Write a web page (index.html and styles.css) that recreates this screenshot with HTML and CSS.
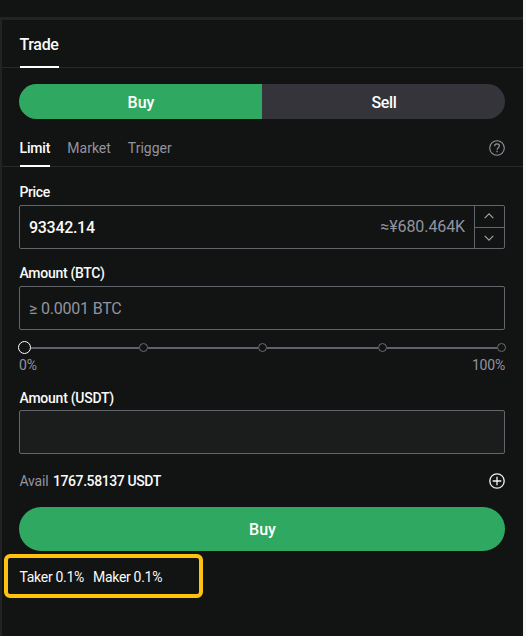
FILE: index.html
```html
<!DOCTYPE html>
<html lang="en">
<head>
  <meta charset="UTF-8" />
  <meta name="viewport" content="width=device-width, initial-scale=1.0"/>
  <title>Trade</title>
  <link rel="stylesheet" href="styles.css">
</head>
<body>
  <div class="page">
    <div class="panel">
      <div class="panel-header">
        <div class="panel-title">Trade</div>
      </div>

      <div class="side-toggle">
        <button class="side buy">Buy</button>
        <button class="side sell">Sell</button>
      </div>

      <div class="order-tabs">
        <div class="tab active">Limit</div>
        <div class="tab">Market</div>
        <div class="tab">Trigger</div>
        <svg class="help" width="16" height="16" viewBox="0 0 16 16" fill="none" stroke="#92939c">
          <circle cx="8" cy="8" r="7.3" stroke-width="1.1"/>
          <path d="M5.6 6.2c0-1.5 1-2.4 2.4-2.4s2.4.9 2.4 2.2c0 1.7-2.3 1.8-2.3 3.7" stroke-width="1.2"/>
          <path d="M8.1 10.8v1.4" stroke-width="1.3"/>
        </svg>
      </div>

      <div class="form">
        <div class="label price-label">Price</div>
        <div class="field">
          <span class="value">93342.14</span>
          <span class="approx">≈¥680.464K</span>
          <div class="stepper">
            <div class="step">
              <svg width="10" height="6" viewBox="0 0 10 6" fill="none" stroke="#a0a1aa" stroke-width="1.2"><path d="M.7 5.2 5 .9l4.3 4.3"/></svg>
            </div>
            <div class="step">
              <svg width="10" height="6" viewBox="0 0 10 6" fill="none" stroke="#a0a1aa" stroke-width="1.2"><path d="M.7.8 5 5.1 9.3.8"/></svg>
            </div>
          </div>
        </div>

        <div class="label btc-label">Amount (BTC)</div>
        <div class="field">
          <span class="placeholder">≥ 0.0001 BTC</span>
        </div>

        <div class="slider">
          <span class="knob"></span>
          <span class="rail"></span>
          <span class="dot"></span>
          <span class="rail"></span>
          <span class="dot"></span>
          <span class="rail"></span>
          <span class="dot"></span>
          <span class="rail"></span>
          <span class="dot"></span>
        </div>
        <div class="slider-labels">
          <span>0%</span>
          <span>100%</span>
        </div>

        <div class="label usdt-label">Amount (USDT)</div>
        <div class="field total"></div>

        <div class="avail">
          <span class="avail-name">Avail</span>
          <span class="avail-value">1767.58137 USDT</span>
          <svg class="plus" width="16" height="16" viewBox="0 0 16 16" fill="none" stroke="#f2f2f2" stroke-width="1.3">
            <circle cx="8" cy="8" r="7.2"/>
            <path d="M8 3.7v8.6M3.7 8h8.6"/>
          </svg>
        </div>

        <button class="submit">Buy</button>

        <div class="fees">
          <span>Taker 0.1%</span>
          <span>Maker 0.1%</span>
        </div>
      </div>
    </div>
  </div>
</body>
</html>
```

FILE: styles.css
```css
:root {
  --bg: #121413;
  --line: #222323;
  --border: #63646c;
  --muted: #92939f;
  --text: #fafafa;
  --green: #2fa861;
}

* {
  box-sizing: border-box;
}

body {
  margin: 0;
  background-color: #f7f7f7;
  font-family: Roboto, 'Noto Sans', sans-serif;
  font-size: 14px;
  color: var(--text);
}

.page {
  width: 523px;
  height: 636px;
  padding-top: 17px;
  background-color: var(--bg);
  overflow: hidden;
}

.panel {
  height: 619px;
  border-top: 3px solid var(--line);
  border-left: 2px solid var(--line);
}

.panel-header {
  display: flex;
  height: 48px;
  padding-left: 17.5px;
  border-bottom: 1px solid #272828;
}

.panel-title {
  height: 48px;
  line-height: 50px;
  font-size: 16px;
  font-weight: 500;
  letter-spacing: -0.35px;
  border-bottom: 2px solid #fff;
}

.side-toggle {
  display: flex;
  height: 35px;
  margin: 16px 18px 0 17px;
  border-radius: 18px;
  overflow: hidden;
}

.side {
  flex: 1;
  padding: 1px 0 0 1px;
  border: none;
  color: #fff;
  font-family: inherit;
  font-size: 16px;
  font-weight: 500;
}

.buy {
  background-color: var(--green);
}

.sell {
  background-color: #34343a;
  letter-spacing: -0.3px;
}

.order-tabs {
  display: flex;
  gap: 17px;
  height: 48px;
  padding: 0 18px 0 17.5px;
  border-bottom: 1px solid #272828;
}

.tab {
  height: 48px;
  line-height: 58px;
  color: var(--muted);
}

.tab.active {
  color: #fff;
  font-weight: 500;
  letter-spacing: -0.15px;
  border-bottom: 2px solid #fff;
}

.help {
  margin: 20.5px 0 0 auto;
}

.form {
  padding: 0 18px 0 17px;
}

.label {
  height: 20px;
  padding-left: 0.5px;
  line-height: 20px;
  font-weight: 500;
  letter-spacing: -0.3px;
}

.price-label {
  margin: 15px 0 3px;
  letter-spacing: -0.4px;
}

.btc-label {
  margin: 14px 0 3px;
}

.usdt-label {
  margin: 13px 0 2px;
  letter-spacing: -0.25px;
}

.field {
  display: flex;
  align-items: center;
  height: 44px;
  padding-left: 9px;
  border: 1px solid var(--border);
  border-radius: 2px;
  font-size: 16px;
}

.field.total {
  background-color: #1b1c1c;
}

.value {
  font-weight: 500;
  letter-spacing: -0.3px;
}

.approx {
  margin-left: auto;
  margin-right: 9px;
  padding-bottom: 1px;
  color: var(--muted);
  letter-spacing: -0.1px;
}

.placeholder {
  color: var(--muted);
  letter-spacing: -0.2px;
}

.stepper {
  width: 30px;
  height: 42px;
  border-left: 1px solid var(--border);
}

.step {
  display: flex;
  align-items: center;
  justify-content: center;
  height: 20px;
  padding-right: 1px;
}

.step:first-child {
  height: 22px;
  padding-bottom: 2px;
  border-bottom: 1px solid var(--border);
}

.slider {
  display: flex;
  align-items: center;
  height: 13px;
  margin: 11px -1px 0 -1.5px;
}

.knob {
  width: 13px;
  height: 13px;
  border: 1.5px solid #fff;
  border-radius: 50%;
}

.dot {
  width: 9px;
  height: 9px;
  border: 1px solid #6a6b72;
  border-radius: 50%;
}

.rail {
  flex: 1;
  height: 2px;
  background-color: #5f6268;
}

.rail:nth-child(2) {
  flex: 0 0 108px;
}

.slider-labels {
  display: flex;
  justify-content: space-between;
  height: 21px;
  line-height: 22px;
  color: var(--muted);
  letter-spacing: -0.2px;
}

.avail {
  display: flex;
  align-items: center;
  height: 20px;
  margin-top: 17px;
}

.avail-name {
  padding-left: 0.5px;
  color: var(--muted);
  letter-spacing: -0.2px;
}

.avail-value {
  margin-left: 4.5px;
  font-weight: 500;
  letter-spacing: -0.4px;
}

.plus {
  margin-left: auto;
}

.submit {
  display: block;
  width: 100%;
  height: 44px;
  margin-top: 16px;
  padding: 0 0 0 1px;
  border: none;
  border-radius: 22px;
  background-color: var(--green);
  color: #fff;
  font-family: inherit;
  font-size: 16px;
  font-weight: 500;
}

.fees {
  display: flex;
  align-items: center;
  gap: 9px;
  width: 199px;
  height: 44px;
  margin: 3px 0 0 -15px;
  padding: 1px 0 0 11.5px;
  border: 4px solid #ffc20e;
  border-radius: 6px;
  letter-spacing: -0.3px;
}
```
